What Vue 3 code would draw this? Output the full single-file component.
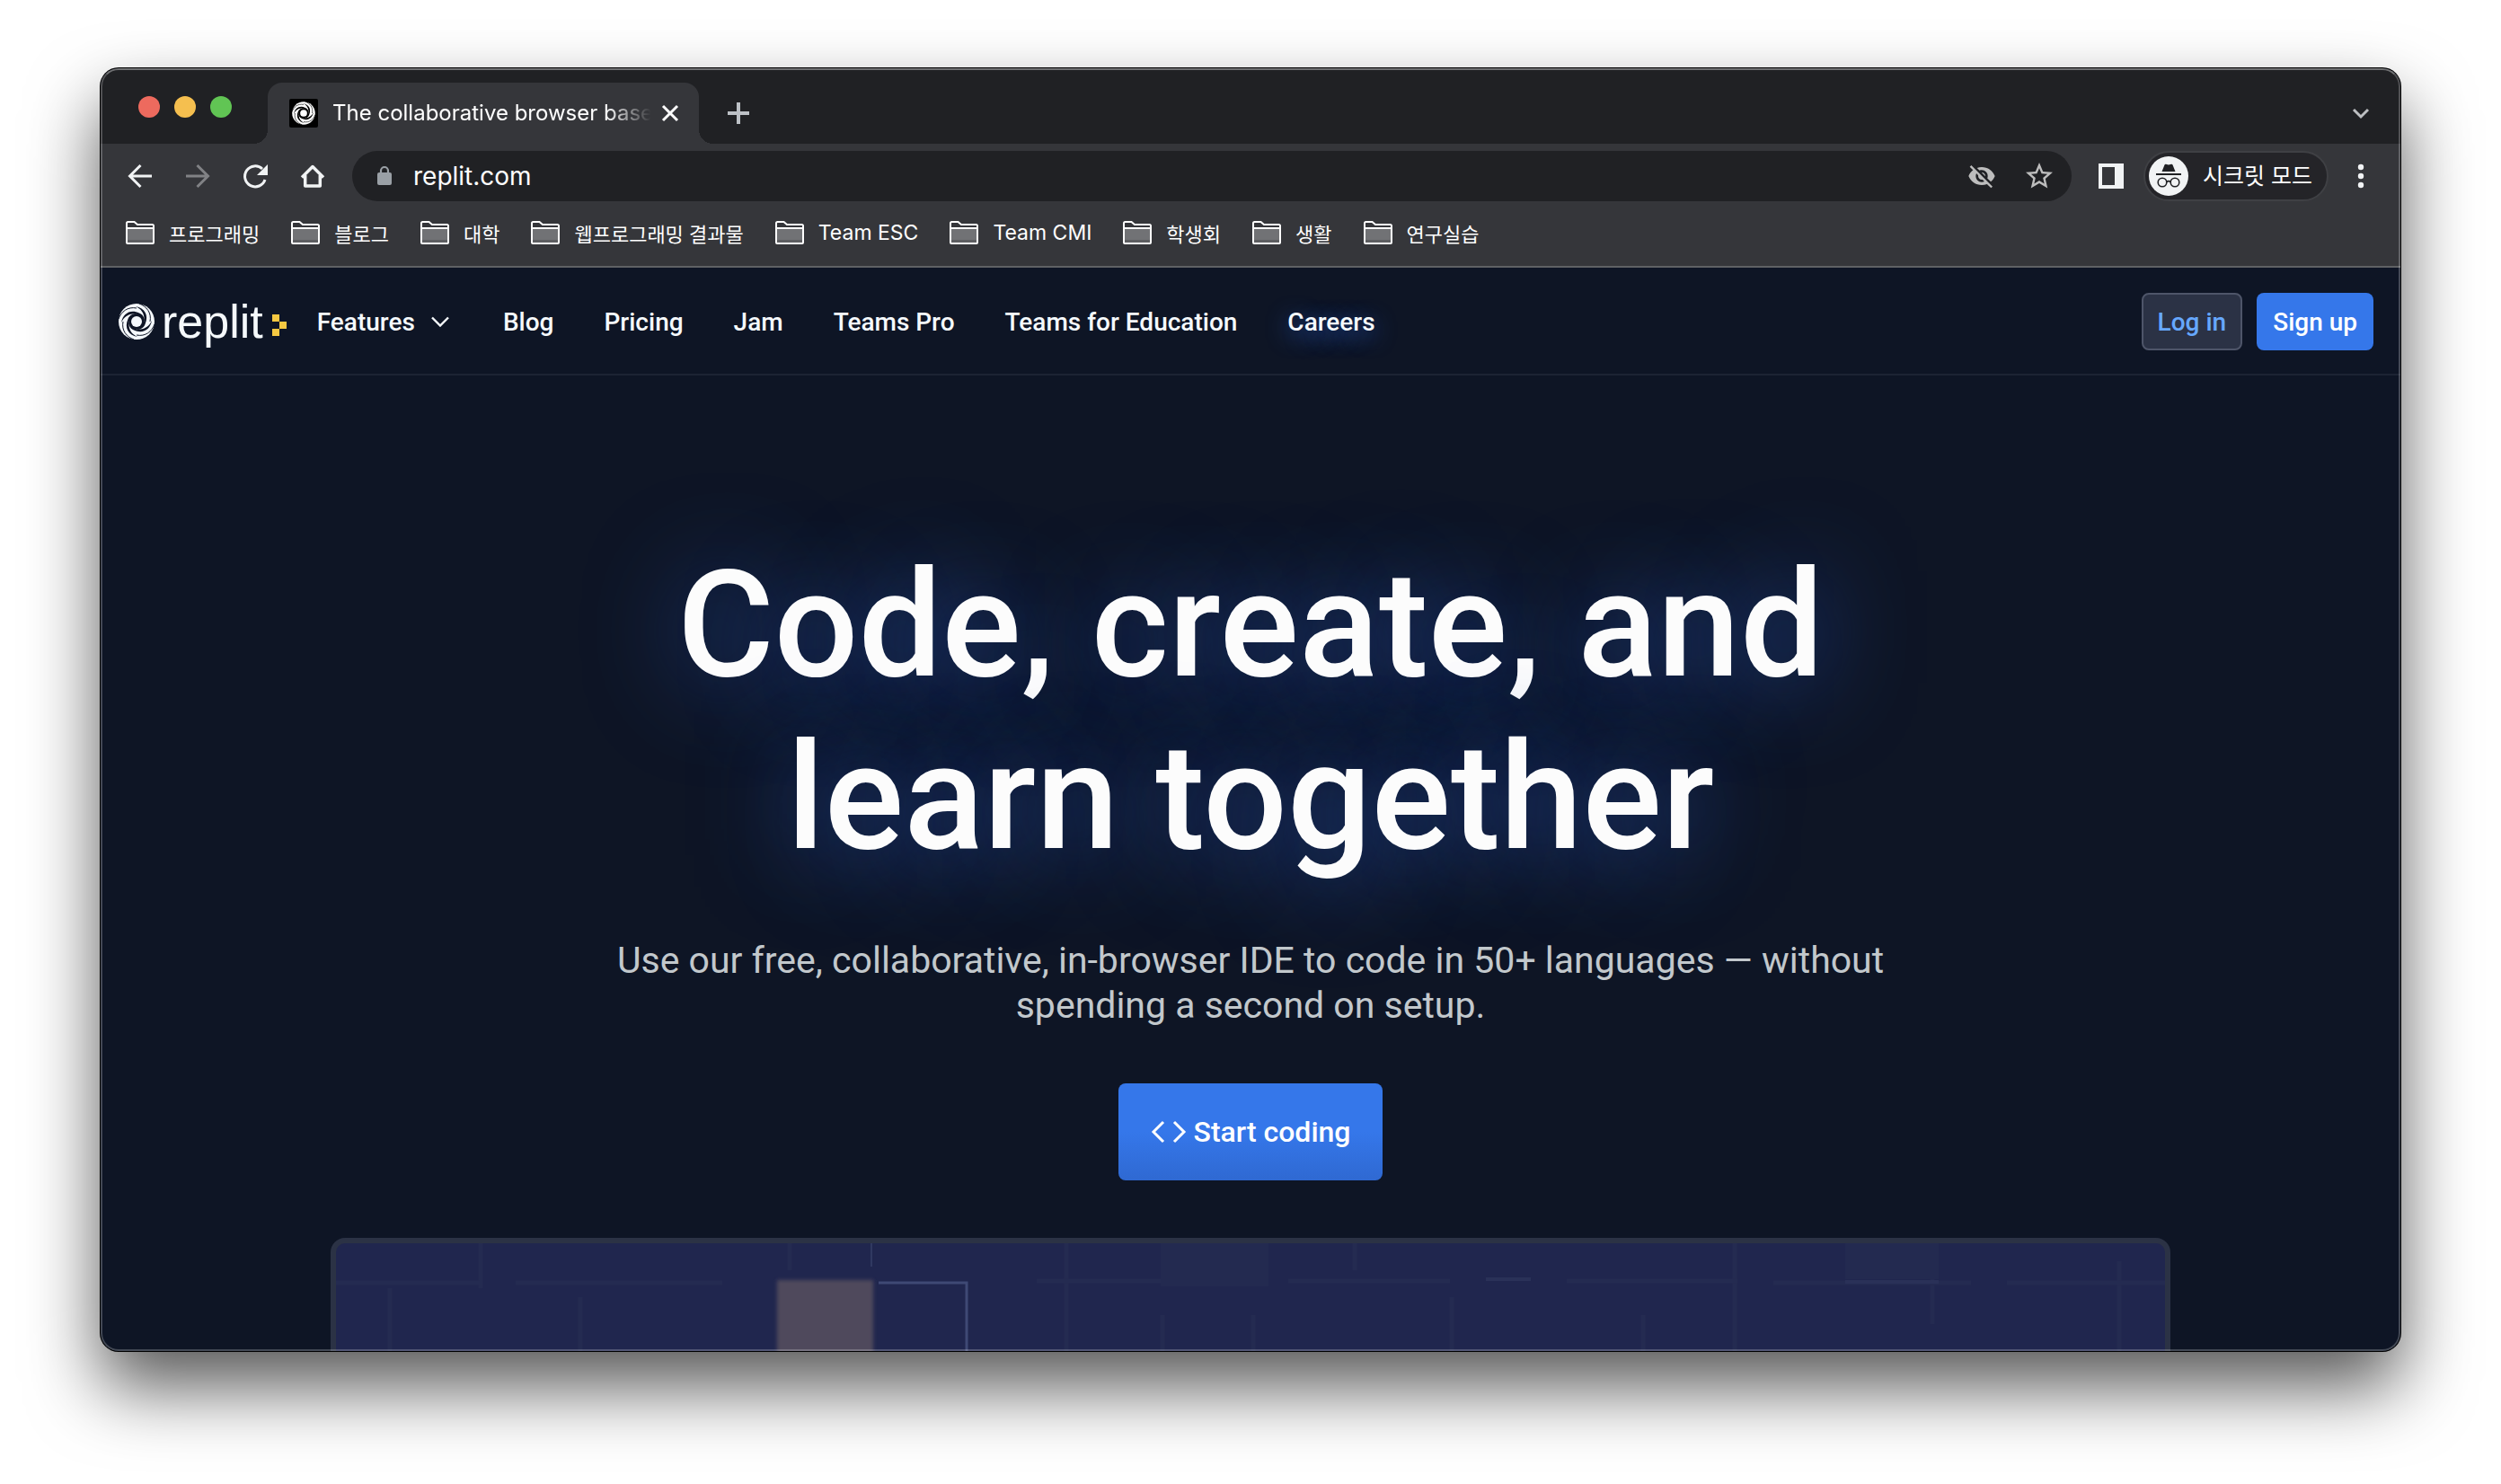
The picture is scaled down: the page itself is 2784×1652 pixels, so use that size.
<script setup>
import { ref } from 'vue'

const address = ref('replit.com')

const bookmarks = [
  { name: '프로그래밍' },
  { name: '블로그' },
  { name: '대학' },
  { name: '웹프로그래밍 결과물' },
  { name: 'Team ESC', latin: true },
  { name: 'Team CMI', latin: true },
  { name: '학생회' },
  { name: '생활' },
  { name: '연구실습' },
]

const links = ['Blog', 'Pricing', 'Jam', 'Teams Pro', 'Teams for Education', 'Careers']

const arms = [0, 90, 180, 270]
</script>

<template>
  <div class="desktop">
    <div class="window">
      <div class="tab-strip">
        <div class="lights">
          <button class="light red" aria-label="Close window"></button>
          <button class="light yellow" aria-label="Minimize window"></button>
          <button class="light green" aria-label="Zoom window"></button>
        </div>
        <div class="tab">
          <svg class="favicon" viewBox="-25 -25 50 50" aria-hidden="true">
            <rect x="-25" y="-25" width="50" height="50" rx="3" fill="#000" />
            <circle r="20" fill="#fff" />
            <circle r="8.500" fill="#000" />
            <circle r="6" fill="#fff" />
            <g v-for="a in arms" :key="a" :transform="`rotate(${a})`">
              <path d="M-1 -17C9 -15 14 -7 9.500 3C8 7 4 9 0 9C6 6 9 2 8.500 -4C8 -10 5 -14 -1 -17Z" fill="#000" />
              <path d="M3 -20C11 -17 17 -10 15 0" fill="none" stroke="#000" stroke-width="1" />
            </g>
          </svg>
          <span class="tab-title">The collaborative browser base</span>
          <button class="icon-button close" aria-label="Close tab">
            <svg width="20" height="20" viewBox="0 0 20 20"><path d="M2 2L18 18M18 2L2 18" stroke="#fff" stroke-width="3" /></svg>
          </button>
        </div>
        <button class="icon-button new-tab" aria-label="New tab">
          <svg width="24" height="24" viewBox="0 0 24 24"><path d="M12 0V24M0 12H24" stroke="#bdc1c6" stroke-width="4" /></svg>
        </button>
        <button class="icon-button tab-search" aria-label="Search tabs">
          <svg width="20" height="20" viewBox="0 0 20 20"><path d="M2 6L10 14L18 6" fill="none" stroke="#bdbfc2" stroke-width="3" /></svg>
        </button>
      </div>

      <div class="toolbar">
        <div class="history">
          <button class="icon-button" aria-label="Back">
            <svg width="32" height="32" viewBox="0 0 32 32" fill="none" stroke="#f1f3f4" stroke-width="3"><path d="M29 16H5M16.500 4L4.500 16L16.500 28" /></svg>
          </button>
          <button class="icon-button" aria-label="Forward">
            <svg width="32" height="32" viewBox="0 0 32 32" fill="none" stroke="#818285" stroke-width="3"><path d="M3 16H27M15.500 4L27.500 16L15.500 28" /></svg>
          </button>
          <button class="icon-button" aria-label="Reload">
            <svg width="32" height="32" viewBox="0 0 32 32">
              <path d="M27 20A11.500 11.500 0 1 1 24 8" fill="none" stroke="#f1f3f4" stroke-width="3" />
              <path d="M30 3V15H18Z" fill="#f1f3f4" />
            </svg>
          </button>
          <button class="icon-button" aria-label="Home">
            <svg width="32" height="32" viewBox="0 0 32 32" fill="none" stroke="#f1f3f4" stroke-width="3.500"><path d="M4 17.500L16 5.500L28 17.500M7.700 15V27H24.300V15" stroke-linejoin="round" /></svg>
          </button>
        </div>
        <div class="omnibox">
          <svg width="16" height="24" viewBox="0 0 16 24" aria-hidden="true">
            <rect x="0" y="8" width="16" height="14" rx="2" fill="#9aa0a6" />
            <path d="M4 9V6A4 4 0 0 1 12 6V9" fill="none" stroke="#9aa0a6" stroke-width="2.200" />
          </svg>
          <input v-model="address" type="text" aria-label="Address" />
          <button class="icon-button" aria-label="Third-party cookies blocked">
            <svg width="32" height="32" viewBox="0 0 24 24" fill="#bdbdbd"><path d="M12 7c2.760 0 5 2.240 5 5 0 .65-.13 1.260-.36 1.830l2.920 2.920c1.510-1.260 2.700-2.890 3.430-4.750-1.730-4.390-6-7.500-11-7.500-1.400 0-2.740.25-3.980.7l2.160 2.160C10.740 7.130 11.350 7 12 7zM2 4.270l2.280 2.280.46.46C3.080 8.300 1.780 10.020 1 12c1.730 4.390 6 7.500 11 7.500 1.550 0 3.030-.3 4.380-.84l.42.42L19.730 22 21 20.730 3.270 3 2 4.270zM7.530 9.800l1.550 1.550c-.05.21-.08.43-.08.65 0 1.660 1.340 3 3 3 .22 0 .44-.03.65-.08l1.550 1.550c-.67.33-1.410.53-2.200.53-2.760 0-5-2.240-5-5 0-.79.2-1.530.53-2.200zm4.310-.78l3.150 3.150.02-.16c0-1.660-1.340-3-3-3l-.17.01z" /></svg>
          </button>
          <button class="icon-button" aria-label="Bookmark this page">
            <svg width="36" height="36" viewBox="0 0 24 24" fill="#bdbdbd"><path d="M22 9.240l-7.190-.62L12 2 9.190 8.630 2 9.240l5.460 4.730L5.820 21 12 17.270 18.180 21l-1.630-7.030L22 9.240zM12 15.400l-3.760 2.270 1-4.280-3.320-2.880 4.380-.38L12 6.100l1.710 4.040 4.380.38-3.320 2.880 1 4.280L12 15.400z" /></svg>
          </button>
        </div>
        <button class="icon-button side-panel" aria-label="Side panel">
          <svg width="28" height="28" viewBox="0 0 28 28"><path fill="#f1f3f4" fill-rule="evenodd" d="M0 0H28V28H0ZM4 4V24H18V4Z" /></svg>
        </button>
        <button class="profile">
          <svg width="44" height="44" viewBox="0 0 44 44" aria-hidden="true">
            <circle cx="22" cy="22" r="22" fill="#f1f3f4" />
            <path fill="#202124" d="M14.500 17L17.500 9.500Q18 8.500 19 8.800L22 9.500L25 8.800Q26 8.500 26.500 9.500L29.500 17ZM8 19H36V21H8Z" />
            <g fill="none" stroke="#202124" stroke-width="1.600">
              <circle cx="15" cy="29" r="4.800" />
              <circle cx="29" cy="29" r="4.800" />
              <path d="M19.800 28.500Q22 26.800 24.200 28.500" />
            </g>
          </svg>
          <span>시크릿 모드</span>
        </button>
        <button class="icon-button menu" aria-label="Menu">
          <svg width="8" height="28" viewBox="0 0 8 28" fill="#f1f3f4"><circle cx="4" cy="4" r="3.200" /><circle cx="4" cy="14" r="3.200" /><circle cx="4" cy="24" r="3.200" /></svg>
        </button>
      </div>

      <div class="bookmarks">
        <button v-for="item in bookmarks" :key="item.name" class="bookmark" :class="{ latin: item.latin }">
          <svg width="32" height="26" viewBox="0 0 32 26" aria-hidden="true">
            <path d="M1 24V2.500Q1 1 2.500 1H9.500L13 4H29.500Q31 4 31 5.500V24Q31 25 30 25H2Q1 25 1 24Z" fill="#35363a" />
            <path d="M1 8H31V25H1Z" fill="#717275" />
            <path d="M1 21H31V25H1Z" fill="#5d5e61" />
            <path d="M1 24V2.500Q1 1 2.500 1H9.500L13 4H29.500Q31 4 31 5.500V24Q31 25 30 25H2Q1 25 1 24ZM1 8H31" fill="none" stroke="#fff" stroke-width="2" />
          </svg>
          <span>{{ item.name }}</span>
        </button>
      </div>

      <div class="site">
        <header class="site-header">
          <a class="logo" href="#" aria-label="replit home">
            <svg width="40" height="40" viewBox="-20 -20 40 40" aria-hidden="true">
              <circle r="20" fill="#f5f9fc" />
              <circle r="8.500" fill="#0e1525" />
              <circle r="6" fill="#f5f9fc" />
              <g v-for="a in arms" :key="a" :transform="`rotate(${a})`">
                <path d="M-1 -17C9 -15 14 -7 9.500 3C8 7 4 9 0 9C6 6 9 2 8.500 -4C8 -10 5 -14 -1 -17Z" fill="#0e1525" />
                <path d="M3 -20C11 -17 17 -10 15 0" fill="none" stroke="#0e1525" stroke-width="1" />
              </g>
            </svg>
            <span class="wordmark">replit</span>
            <svg class="prompt" width="16" height="24" viewBox="0 0 16 24" fill="#f5c842" aria-hidden="true">
              <path d="M0 0H8V8H0ZM8 8H16V16H8ZM0 16H8V24H0Z" />
            </svg>
          </a>
          <nav class="site-nav">
            <button class="features">
              Features
              <svg width="20" height="12" viewBox="0 0 20 12" aria-hidden="true"><path d="M1 1.500L10 10.500L19 1.500" fill="none" stroke="#f5f9fc" stroke-width="2.400" /></svg>
            </button>
            <a v-for="link in links" :key="link" href="#" :class="{ glow: link === 'Careers' }">{{ link }}</a>
          </nav>
          <div class="account">
            <button class="login">Log in</button>
            <button class="signup">Sign up</button>
          </div>
        </header>

        <main class="hero">
          <h1>Code, create, and<br />learn together</h1>
          <p>Use our free, collaborative, in-browser IDE to code in 50+ languages — without spending a second on setup.</p>
          <button class="start">
            <svg width="40" height="26" viewBox="0 0 40 26" fill="none" stroke="#fff" stroke-width="3" aria-hidden="true"><path d="M14 2L3 13L14 24M26 2L37 13L26 24" /></svg>
            Start coding
          </button>
          <div class="video">
            <svg width="2036" height="200" viewBox="0 0 2036 200" aria-hidden="true">
              <defs>
                <filter id="soft" x="-10%" y="-10%" width="120%" height="120%"><feGaussianBlur stdDeviation="2" /></filter>
              </defs>
              <g stroke="#242b51" stroke-width="5">
                <path d="M60 50V200M161 0V50M272 60V200M505 0V30M813 0V200M920 80V200M1021 80V200M1134 0V30M1242 60V200M1455 80V200M1557 0V200M1777 0V90M1985 20V200" />
                <path d="M0 44H160M200 44H430M780 42H1000M1060 42H1240M1370 42H1560M1600 44H1820M1860 44H2036" />
              </g>
              <path d="M1280 40H1330M1680 43H1784" stroke="#2a3158" stroke-width="4" />
              <rect x="918" width="120" height="48" fill="#232a50" />
              <rect x="1680" width="104" height="40" fill="#232a50" />
              <path d="M596 0V26" stroke="#303961" stroke-width="2" />
              <rect x="491" y="41" width="107" height="170" fill="#50495c" filter="url(#soft)" />
              <path d="M604 44H702V200" fill="none" stroke="#3f4975" stroke-width="3" />
            </svg>
          </div>
        </main>
      </div>
    </div>
  </div>
</template>

<style>
body {
  margin: 0;
  background: #fff;
}
</style>

<style scoped>
* {
  box-sizing: border-box;
}

button {
  margin: 0;
  padding: 0;
  border: 0;
  background: none;
  color: inherit;
  font: inherit;
  cursor: pointer;
}

a {
  color: inherit;
  text-decoration: none;
}

svg {
  display: block;
  flex: none;
}

.desktop {
  height: 100vh;
  padding: 76px 112px 148px;
  font-family: Inter, "Noto Sans CJK KR", sans-serif;
}

.window {
  position: relative;
  display: flex;
  flex-direction: column;
  height: 100%;
  overflow: hidden;
  border-radius: 20px;
  background: #0e1525;
  box-shadow: 0 0 0 1px #000, 0 40px 80px rgba(0, 0, 0, 0.66);
  color: #fff;
}

.window::after {
  content: "";
  position: absolute;
  inset: 0;
  border: 2px solid rgba(255, 255, 255, 0.22);
  border-top-color: rgba(255, 255, 255, 0.36);
  border-radius: 20px;
  pointer-events: none;
}

.icon-button {
  display: flex;
  flex: none;
  align-items: center;
  justify-content: center;
}

/* Tab strip */
.tab-strip {
  display: flex;
  flex: none;
  align-items: flex-end;
  height: 84px;
  padding-right: 34px;
  background: #202124;
}

.lights {
  display: flex;
  gap: 16px;
  width: 186px;
  padding: 0 0 29px 42px;
}

.light {
  width: 24px;
  height: 24px;
  border-radius: 50%;
}

.red {
  background: #ed6a5e;
}

.yellow {
  background: #f5bf4f;
}

.green {
  background: #61c554;
}

.tab {
  position: relative;
  display: flex;
  align-items: center;
  width: 480px;
  height: 68px;
  padding: 0 18px 0 24px;
  border-radius: 16px 16px 0 0;
  background: #35363a;
}

.tab::before,
.tab::after {
  content: "";
  position: absolute;
  bottom: 0;
  width: 16px;
  height: 16px;
}

.tab::before {
  right: 100%;
  background: radial-gradient(circle at 0 0, transparent 16px, #35363a 16px);
}

.tab::after {
  left: 100%;
  background: radial-gradient(circle at 100% 0, transparent 16px, #35363a 16px);
}

.favicon {
  width: 32px;
  height: 32px;
}

.tab-title {
  flex: 1;
  margin-left: 16px;
  font-size: 24px;
  line-height: 32px;
  white-space: nowrap;
  mask-image: linear-gradient(to right, #000 84%, transparent 98%);
}

.close {
  width: 28px;
  height: 28px;
}

.new-tab {
  width: 56px;
  height: 68px;
  margin-left: 16px;
}

.tab-search {
  width: 20px;
  height: 68px;
  margin-left: auto;
}

/* Toolbar */
.toolbar {
  display: flex;
  flex: none;
  align-items: center;
  height: 72px;
  padding: 0 40px 0 28px;
  background: #35363a;
}

.history {
  display: flex;
  gap: 32px;
  margin-right: 28px;
}

.omnibox {
  display: flex;
  flex: 1;
  align-items: center;
  gap: 30px;
  height: 56px;
  padding: 0 18px 0 28px;
  border-radius: 28px;
  background: #202124;
}

.omnibox input {
  flex: 1;
  min-width: 0;
  margin-left: -6px;
  padding: 0;
  border: 0;
  outline: 0;
  background: none;
  color: #fff;
  font-family: inherit;
  font-size: 28px;
  line-height: 36px;
}

.side-panel {
  margin: 0 22px 0 30px;
}

.profile {
  display: flex;
  align-items: center;
  gap: 16px;
  height: 56px;
  padding: 0 16px 0 4px;
  border: 2px solid #3f4044;
  border-radius: 28px;
  background: #242428;
  font-size: 25px;
  line-height: 32px;
  white-space: nowrap;
}

.menu {
  margin-left: 32px;
}

/* Bookmarks bar */
.bookmarks {
  display: flex;
  flex: none;
  gap: 35px;
  height: 66px;
  padding: 0 28px 10px;
  border-bottom: 2px solid #5f6164;
  background: #35363a;
}

.bookmark {
  display: flex;
  align-items: center;
  gap: 16px;
  font-size: 22px;
  white-space: nowrap;
}

.latin {
  font-size: 23px;
}

/* Site */
.site {
  display: flex;
  flex: 1;
  flex-direction: column;
  min-height: 0;
  overflow: hidden;
  font-family: Roboto, "Noto Sans", sans-serif;
}

.site-header {
  display: flex;
  flex: none;
  align-items: center;
  height: 120px;
  padding: 2px 30px 0 20px;
  border-bottom: 2px solid #1c2333;
  color: #f5f9fc;
  font-size: 28px;
  font-weight: 500;
}

.logo {
  display: flex;
  align-items: center;
}

.wordmark {
  margin: 0 10px 0 8px;
  font-family: "Liberation Sans", sans-serif;
  font-size: 52px;
  font-weight: 400;
  line-height: 60px;
}

.prompt {
  margin-top: 8px;
}

.site-nav {
  display: flex;
  gap: 56px;
  margin-left: 34px;
  white-space: nowrap;
}

.features {
  display: flex;
  align-items: center;
  gap: 18px;
  margin-right: 4px;
}

.glow {
  text-shadow: 0 6px 24px #2c5ec4;
}

.account {
  display: flex;
  gap: 16px;
  margin-left: auto;
}

.login,
.signup {
  height: 64px;
  padding: 0 18px;
  border-radius: 8px;
}

.login {
  padding: 0 16px;
  border: 2px solid #4e5569;
  background: #2b3245;
  color: #66a8ff;
}

.signup {
  background: #3577ea;
  color: #fff;
}

.hero {
  display: flex;
  flex: 1;
  flex-direction: column;
  align-items: center;
  min-height: 0;
  padding-top: 182px;
  text-align: center;
}

h1 {
  margin: 0;
  color: #fcfcfc;
  font-size: 165px;
  font-weight: 500;
  line-height: 192px;
  text-shadow: 0 8px 104px #244a9c;
}

p {
  max-width: 1440px;
  margin: 60px 0 62px;
  color: #c2c8cc;
  font-size: 41px;
  line-height: 50px;
}

.start {
  display: flex;
  flex: none;
  align-items: center;
  gap: 8px;
  height: 108px;
  padding: 0 36px;
  border-radius: 8px;
  background: linear-gradient(#3577ea 50%, #2f69d2);
  color: #fff;
  font-size: 32px;
  font-weight: 500;
}

.video {
  flex: none;
  width: 80%;
  height: 600px;
  margin-top: 64px;
  overflow: hidden;
  border: 6px solid #2b3245;
  border-radius: 16px;
  background: #20264e;
}
</style>
